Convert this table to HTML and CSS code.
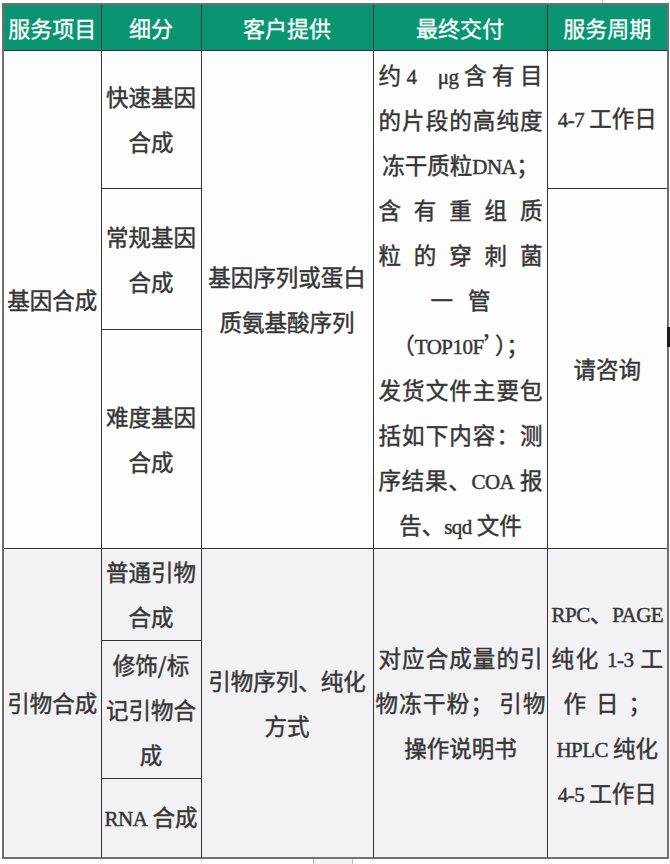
FILE: index.html
```html
<!DOCTYPE html>
<html lang="zh-CN">
<head>
<meta charset="utf-8">
<title>服务项目</title>
<link rel="stylesheet" href="styles.css">
</head>
<body>
<div class="page">
  <table class="svc">
    <colgroup>
      <col class="c1"><col class="c2"><col class="c3"><col class="c4"><col class="c5">
    </colgroup>
    <thead>
      <tr class="hd">
        <th>服务项目</th><th>细分</th><th>客户提供</th><th>最终交付</th><th>服务周期</th>
      </tr>
    </thead>
    <tbody class="gene">
      <tr class="g1">
        <td rowspan="3">基因合成</td>
        <td>快速基因<br>合成</td>
        <td rowspan="3" class="wide">基因序列或蛋白<br>质氨基酸序列</td>
        <td rowspan="3" class="deliv">
          <div class="ln j">约<span class="lat">4</span>&nbsp;&nbsp;<span class="lat">μg</span>含有目</div>
          <div class="ln j">的片段的高纯度</div>
          <div class="ln">冻干质粒<span class="lat">DNA</span>；</div>
          <div class="ln j">含 有 重 组 质</div>
          <div class="ln j">粒 的 穿 刺 菌</div>
          <div class="ln c">一&nbsp;&nbsp;&nbsp;管</div>
          <div class="ln c">（<span class="lat">TOP10F</span>’）；</div>
          <div class="ln j">发货文件主要包</div>
          <div class="ln j">括如下内容：测</div>
          <div class="ln j">序结果、<span class="lat">COA</span> 报</div>
          <div class="ln c">告、<span class="lat">sqd</span> 文件</div>
        </td>
        <td><span class="lat">4-7</span> 工作日</td>
      </tr>
      <tr class="g2">
        <td>常规基因<br>合成</td>
        <td rowspan="2">请咨询</td>
      </tr>
      <tr class="g3">
        <td>难度基因<br>合成</td>
      </tr>
    </tbody>
    <tbody class="primer">
      <tr class="p1">
        <td rowspan="3">引物合成</td>
        <td>普通引物<br>合成</td>
        <td rowspan="3" class="wide">引物序列、纯化<br>方式</td>
        <td rowspan="3" class="deliv">
          <div class="ln j">对应合成量的引</div>
          <div class="ln j tight">物冻干粉； 引物</div>
          <div class="ln c">操作说明书</div>
        </td>
        <td rowspan="3" class="period">
          <div class="ln c"><span class="lat">RPC</span>、<span class="lat">PAGE</span></div>
          <div class="ln j">纯化 <span class="lat">1-3</span> 工</div>
          <div class="ln c">作&nbsp;&nbsp;日&nbsp;&nbsp;；</div>
          <div class="ln c"><span class="lat">HPLC</span> 纯化</div>
          <div class="ln c"><span class="lat">4-5</span> 工作日</div>
        </td>
      </tr>
      <tr class="p2">
        <td>修饰/标<br>记引物合<br>成</td>
      </tr>
      <tr class="p3">
        <td><span class="lat">RNA</span> 合成</td>
      </tr>
    </tbody>
  </table>
  <div class="mark-r"></div>
  <div class="mark-t"></div>
  <div class="stub"></div>
</div>
</body>
</html>
```

FILE: styles.css
```css
html, body {
  margin: 0;
  padding: 0;
  background: #ffffff;
}

.page {
  position: relative;
  width: 670px;
  height: 864px;
  overflow: hidden;
  font-family: "Noto Sans CJK SC", "Noto Sans", sans-serif;
  color: #363636;
}

.svc {
  border-collapse: collapse;
  table-layout: fixed;
  width: 666px;
  margin: 3px 0 0 2px;
  border: 2px solid #707070;
}

.c1 { width: 98px; }
.c2 { width: 100px; }
.c3 { width: 172px; }
.c4 { width: 174px; }
.c5 { width: 121px; }

.svc th,
.svc td {
  border: 1px solid #333333;
  padding: 0 3px;
  text-align: center;
  vertical-align: middle;
  line-height: 45px;
  font-size: 22.5px;
  font-weight: 400;
  white-space: nowrap;
  -webkit-text-stroke: 0.45px currentColor;
}

.svc th {
  background: #0a9572;
  color: #ffffff;
  font-size: 22px;
  line-height: 30px;
  -webkit-text-stroke: 0.3px currentColor;
}

.hd { height: 46px; }

.gene td { background: #fdfdfd; }
.primer td { background: #f2f1f3; }

.g1 { height: 138px; }
.g2 { height: 141px; }
.g3 { height: 219px; }
.p1 { height: 92px; }
.p2 { height: 138px; }
.p3 { height: 80px; }

.svc td.deliv { padding: 0 4px 0 5px; }
.svc td.period { padding: 0 4px; }

.ln {
  height: 45px;
  line-height: 45px;
  white-space: nowrap;
}

.ln.j {
  text-align: justify;
  text-align-last: justify;
  white-space: normal;
}

.ln.tight { margin: 0 -3px; }

.ln.c { text-align: center; }

.lat {
  font-family: "Liberation Serif", "Times New Roman", serif;
  font-size: 21px;
  letter-spacing: -0.5px;
}

.mark-r {
  position: absolute;
  left: 667px;
  top: 327px;
  width: 3px;
  height: 20px;
  background: #1a1a1a;
}

.mark-t {
  position: absolute;
  left: 602px;
  top: 0;
  width: 1px;
  height: 3px;
  background: #c8c8c8;
}

.stub {
  position: absolute;
  left: 313px;
  top: 859px;
  width: 38px;
  height: 5px;
  background: #f4f4f4;
  border-left: 1px solid #bdbdbd;
  border-right: 1px solid #bdbdbd;
}
```
